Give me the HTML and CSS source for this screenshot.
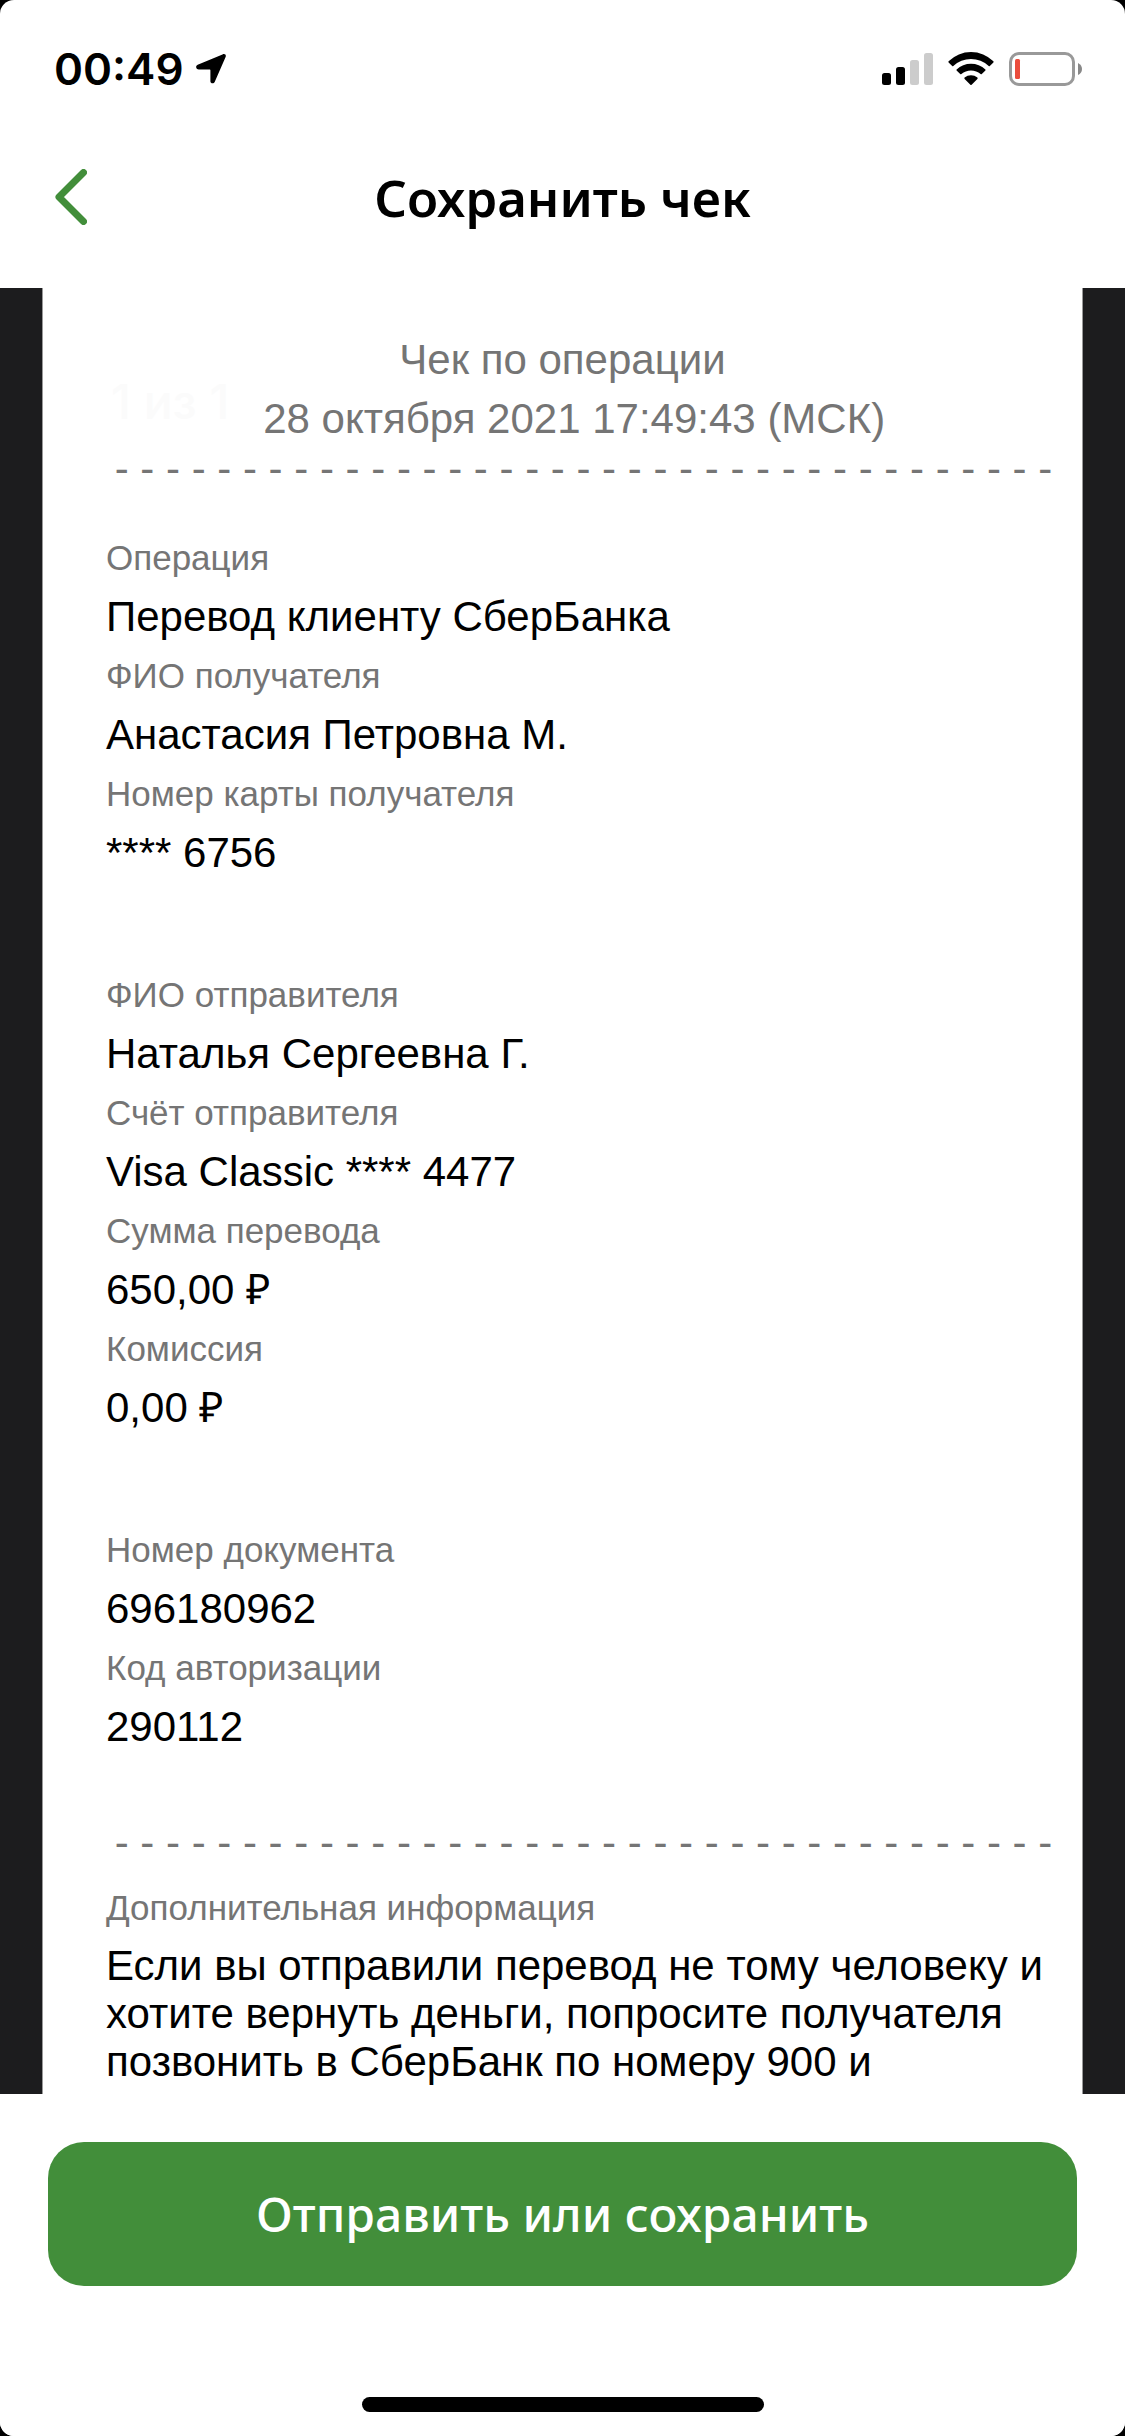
FILE: index.html
```html
<!DOCTYPE html>
<html lang="ru">
<head>
    <meta charset="UTF-8">
    <meta name="viewport" content="width=device-width, initial-scale=1.0">
    <title>Сохранить чек</title>
    <link rel="stylesheet" href="styles.css">
</head>
<body>
    <div class="screen">
        <div class="status-bar">
            <div class="status-time">
                <span>00:49</span>
                <svg width="30" height="30" viewBox="0 0 30 30" aria-hidden="true">
                    <path d="M26.5 0.4C29 -0.5 30.4 0.9 29.6 3L18.8 27.8C17.7 30.2 14.4 29.7 14.4 27.2V16.4C14.4 15.7 14.2 15.4 13.5 15.4H2.8C0.1 15.4 -1 12 1.7 10.8Z" fill="#000"/>
                </svg>
            </div>
            <div class="status-icons">
                <svg width="51" height="34" viewBox="0 0 51 34" aria-hidden="true">
                    <rect x="0" y="21" width="9" height="12" rx="2.5" fill="#000"/>
                    <rect x="14" y="15" width="9" height="18" rx="2.5" fill="#000"/>
                    <rect x="28" y="8" width="9" height="25" rx="2.5" fill="#ccc"/>
                    <rect x="42" y="1" width="9" height="32" rx="2.5" fill="#ccc"/>
                </svg>
                <svg width="46" height="34" viewBox="0 0 46 34" aria-hidden="true">
                    <path d="M0.6 9.2A32 32 0 0 1 45.4 9.2Q45.8 9.8 45.4 10.4L41.8 14Q41.3 14.4 40.7 14A26 26 0 0 0 5.3 14Q4.7 14.4 4.2 14L0.6 10.4Q0.2 9.8 0.6 9.2Z" fill="#000"/>
                    <path d="M8.6 17.4A21 21 0 0 1 37.4 17.4Q37.8 18 37.4 18.6L33.8 22.1Q33.2 22.6 32.6 22.1A14.5 14.5 0 0 0 13.4 22.1Q12.8 22.6 12.2 22.1L8.6 18.6Q8.2 18 8.6 17.4Z" fill="#000"/>
                    <path d="M16.6 25.6A10 10 0 0 1 29.4 25.6Q30 26.2 29.4 26.9L23.6 32.8Q23 33.3 22.4 32.8L16.6 26.9Q16 26.2 16.6 25.6Z" fill="#000"/>
                </svg>
                <svg width="73" height="34" viewBox="0 0 73 34" aria-hidden="true">
                    <rect x="1.5" y="1.5" width="63" height="31" rx="8.5" fill="none" stroke="#999" stroke-width="3"/>
                    <rect x="6" y="7" width="5" height="20" rx="1.5" fill="#eb4d3d"/>
                    <path d="M69 11Q73 13 73 17T69 23Z" fill="#888"/>
                </svg>
            </div>
        </div>

        <header class="nav-bar">
            <button class="back-btn" type="button" aria-label="Назад">
                <svg width="32" height="56" viewBox="0 0 32 56" aria-hidden="true">
                    <path d="M28.5 3.5L4 28L28.5 52.5" fill="none" stroke="#428e3a" stroke-width="7" stroke-linecap="round" stroke-linejoin="round"/>
                </svg>
            </button>
            <h1>Сохранить чек</h1>
        </header>

        <main class="viewer">
            <article class="receipt">
                <span class="page-badge">1 из 1</span>
                <div class="receipt-head">
                    <p>Чек по операции</p>
                    <p>&nbsp; 28 октября 2021 17:49:43 (МСК)</p>
                </div>
                <div class="divider" aria-hidden="true">&nbsp;- - - - - - - - - - - - - - - - - - - - - - - - - - - - - - - - - - - - -</div>

                <div class="details">
                    <dl>
                        <dt>Операция</dt>
                        <dd>Перевод клиенту СберБанка</dd>
                        <dt>ФИО получателя</dt>
                        <dd>Анастасия Петровна М.</dd>
                        <dt>Номер карты получателя</dt>
                        <dd>**** 6756</dd>
                    </dl>
                    <dl>
                        <dt>ФИО отправителя</dt>
                        <dd>Наталья Сергеевна Г.</dd>
                        <dt>Счёт отправителя</dt>
                        <dd>Visa Classic **** 4477</dd>
                        <dt>Сумма перевода</dt>
                        <dd>650,00 ₽</dd>
                        <dt>Комиссия</dt>
                        <dd>0,00 ₽</dd>
                    </dl>
                    <dl>
                        <dt>Номер документа</dt>
                        <dd>696180962</dd>
                        <dt>Код авторизации</dt>
                        <dd>290112</dd>
                    </dl>
                </div>

                <div class="divider" aria-hidden="true">&nbsp;- - - - - - - - - - - - - - - - - - - - - - - - - - - - - - - - - - - - -</div>
                <dl class="extra">
                    <dt>Дополнительная информация</dt>
                    <dd>Если вы отправили перевод не тому человеку и хотите вернуть деньги, попросите получателя позвонить в СберБанк по номеру 900 и</dd>
                </dl>
            </article>
        </main>

        <footer class="actions">
            <button class="save-btn" type="button">Отправить или сохранить</button>
            <div class="home-indicator"></div>
        </footer>
    </div>
</body>
</html>
```

FILE: styles.css
```css
:root {
    --green: #428e3a;
    --muted: #757575;
    --viewer-bg: #1c1c1e;
}

* {
    box-sizing: border-box;
    margin: 0;
    padding: 0;
}

body {
    background: #000;
    color: #000;
    font-family: "Noto Sans", "Open Sans", sans-serif;
}

button {
    border: none;
    background: none;
    font-family: inherit;
    cursor: pointer;
}

svg {
    display: block;
}

.screen {
    display: flex;
    flex-direction: column;
    height: 100vh;
    background: #fff;
    border-radius: 14px;
    overflow: hidden;
}

/* status bar */
.status-bar {
    display: flex;
    flex: none;
    justify-content: space-between;
    align-items: center;
    height: 138px;
    padding: 0 43px 0 54px;
}

.status-time {
    display: flex;
    align-items: center;
    gap: 12px;
    font-family: Inter, sans-serif;
    font-size: 44px;
    font-weight: 600;
}

.status-icons {
    display: flex;
    align-items: center;
    gap: 15px;
}

/* title */
.nav-bar {
    display: grid;
    grid-template-columns: 60px 1fr 60px;
    flex: none;
    align-items: center;
    height: 150px;
    padding: 0 55px 32px;
}

.nav-bar h1 {
    font-size: 51px;
    font-weight: 600;
    text-align: center;
}

/* receipt */
.viewer {
    display: flex;
    flex: 1;
    min-height: 0;
    padding: 0 43px;
    background: var(--viewer-bg);
    overflow: hidden;
}

.receipt {
    position: relative;
    flex: 1;
    padding-top: 42px;
    background: #fff;
    box-shadow: 0 0 0 1px #999;
    font-family: "Liberation Sans", Arial, sans-serif;
    font-size: 42px;
    line-height: 59px;
}

.page-badge {
    position: absolute;
    top: 84px;
    left: 68px;
    color: #fbfbfb;
    font-family: Inter, sans-serif;
    font-size: 48px;
    font-weight: 500;
}

.receipt-head {
    color: var(--muted);
    text-align: center;
}

.divider {
    padding-left: 60px;
    color: var(--muted);
    line-height: 42px;
    white-space: nowrap;
}

.details {
    display: flex;
    flex-direction: column;
    gap: 83px;
    padding: 38px 20px 66px 63px;
}

dt {
    color: var(--muted);
    font-size: 35px;
}

.extra {
    padding: 14px 20px 0 63px;
}

.extra dd {
    padding-top: 5px;
    line-height: 48px;
}

/* bottom panel */
.actions {
    flex: none;
    padding: 48px 48px 24px;
    background: #fff;
}

.save-btn {
    display: block;
    width: 100%;
    height: 144px;
    padding-bottom: 2px;
    border-radius: 36px;
    background: var(--green);
    color: #fff;
    font-size: 48px;
    font-weight: 500;
}

.home-indicator {
    width: 402px;
    height: 15px;
    margin: 111px auto 0;
    border-radius: 8px;
    background: #000;
}
```
